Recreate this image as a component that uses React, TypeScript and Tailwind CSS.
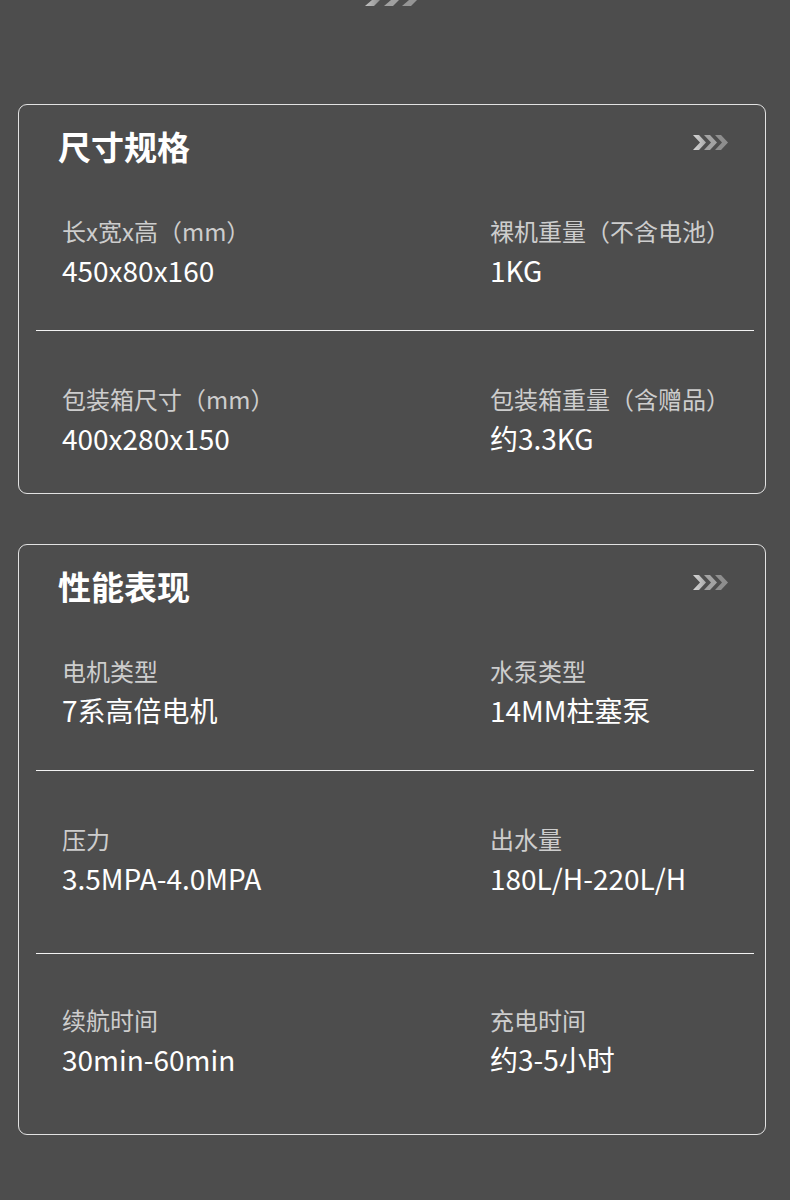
import React from "react";

type Item = { label: string; value: string };
type Row = { items: [Item, Item]; pad: string };
type Section = { title: string; rows: Row[] };

const font = { fontFamily: '"Noto Sans CJK SC", "Noto Sans", sans-serif' };

const sections: Section[] = [
  {
    title: "尺寸规格",
    rows: [
      {
        items: [
          { label: "长x宽x高（mm）", value: "450x80x160" },
          { label: "裸机重量（不含电池）", value: "1KG" },
        ],
        pad: "pt-[47px] pb-[42px]",
      },
      {
        items: [
          { label: "包装箱尺寸（mm）", value: "400x280x150" },
          { label: "包装箱重量（含赠品）", value: "约3.3KG" },
        ],
        pad: "pt-[52px] pb-[37px]",
      },
    ],
  },
  {
    title: "性能表现",
    rows: [
      {
        items: [
          { label: "电机类型", value: "7系高倍电机" },
          { label: "水泵类型", value: "14MM柱塞泵" },
        ],
        pad: "pt-[47px] pb-[42px]",
      },
      {
        items: [
          { label: "压力", value: "3.5MPA-4.0MPA" },
          { label: "出水量", value: "180L/H-220L/H" },
        ],
        pad: "pt-[52px] pb-[57px]",
      },
      {
        items: [
          { label: "续航时间", value: "30min-60min" },
          { label: "充电时间", value: "约3-5小时" },
        ],
        pad: "pt-[50px] pb-[57px]",
      },
    ],
  },
];

const Chevrons = () => (
  <svg width="35" height="15" viewBox="0 0 35 15" className="mt-[11px]">
    <defs>
      <linearGradient id="chev1" x1="0" y1="0" x2="1" y2="0">
        <stop offset="0" stopColor="#d8d8d8" />
        <stop offset="1" stopColor="#a9a9a9" />
      </linearGradient>
    </defs>
    <polygon points="0,0 6,0 13,7.5 6,15 0,15 7,7.5" fill="url(#chev1)" />
    <polygon points="11,0 17,0 24,7.5 17,15 11,15 18,7.5" fill="#a2a2a2" />
    <polygon points="22,0 28,0 35,7.5 28,15 22,15 29,7.5" fill="#8e8e8e" />
  </svg>
);

const TopMarks = () => (
  <svg width="54" height="6" viewBox="0 0 54 6">
    <defs>
      <linearGradient id="mark" x1="0" y1="0" x2="1" y2="0">
        <stop offset="0" stopColor="#c4c4c4" />
        <stop offset="1" stopColor="#8f8f8f" />
      </linearGradient>
    </defs>
    <polygon points="7,0 15,0 9,6 0,6" fill="url(#mark)" />
    <polygon points="26,0 34,0 28,6 19,6" fill="#a0a0a0" />
    <polygon points="44,0 52,0 46,6 37,6" fill="#959595" />
  </svg>
);

const SpecCard = ({ section }: { section: Section }) => (
  <div className="mx-[18px] w-[748px] rounded-[9px] border border-[#e2e2e2]">
    <div className="flex items-start justify-between pl-[39px] pr-[37px] pt-[19px]">
      <h2 className="text-[33px] font-bold leading-[44px] text-white">
        {section.title}
      </h2>
      <Chevrons />
    </div>
    {section.rows.map((row, i) => (
      <div key={i}>
        {i > 0 && <div className="ml-[17px] h-px w-[718px] bg-[#f2f2f2]" />}
        <div className={`grid grid-cols-[428px_1fr] pl-[43px] ${row.pad}`}>
          {row.items.map((item) => (
            <div key={item.label} className="flex flex-col gap-[5px]">
              <span className="whitespace-nowrap text-[24px] leading-[32px] text-[#cdcdcd]">
                {item.label}
              </span>
              <span className="whitespace-nowrap text-[28px] leading-[36px] text-white">
                {item.value}
              </span>
            </div>
          ))}
        </div>
      </div>
    ))}
  </div>
);

export default function App() {
  return (
    <div className="h-[1200px] w-full overflow-hidden bg-[#4d4d4d]" style={font}>
      <div className="h-[6px] pl-[365px] leading-none">
        <TopMarks />
      </div>
      <div className="mt-[98px] flex flex-col gap-[50px]">
        {sections.map((s) => (
          <SpecCard key={s.title} section={s} />
        ))}
      </div>
    </div>
  );
}
